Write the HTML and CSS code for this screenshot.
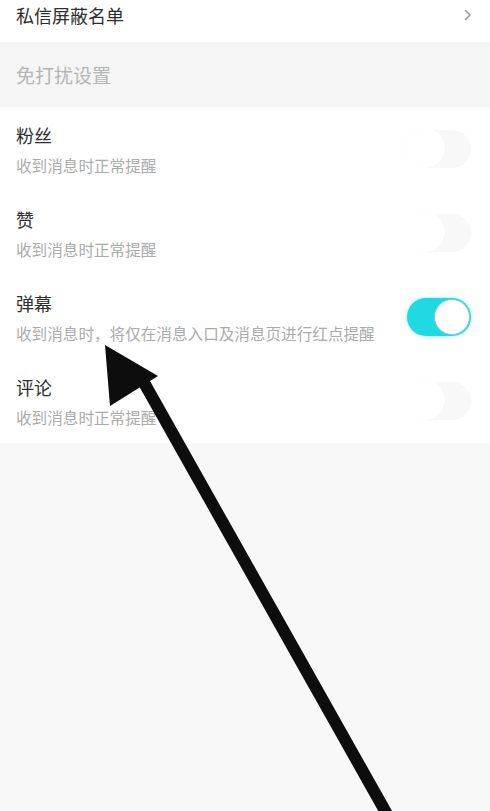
FILE: index.html
```html
<!DOCTYPE html>
<html lang="zh-CN">
<head>
<meta charset="utf-8">
<title>设置</title>
<link rel="stylesheet" href="styles.css">
</head>
<body>
<div class="page">
  <div class="top-row">
    <span class="top-title">私信屏蔽名单</span>
    <svg class="chevron" width="8" height="12" viewBox="0 0 8 12"><path d="M1.5 1.5 L6 6 L1.5 10.5" fill="none" stroke="#9a9a9a" stroke-width="1.6" stroke-linecap="round" stroke-linejoin="round"/></svg>
  </div>
  <div class="section-head">免打扰设置</div>
  <div class="list">
    <div class="row">
      <div class="texts"><div class="title">粉丝</div><div class="sub">收到消息时正常提醒</div></div>
      <div class="toggle"><div class="knob"></div></div>
    </div>
    <div class="row">
      <div class="texts"><div class="title">赞</div><div class="sub">收到消息时正常提醒</div></div>
      <div class="toggle"><div class="knob"></div></div>
    </div>
    <div class="row">
      <div class="texts"><div class="title">弹幕</div><div class="sub">收到消息时，将仅在消息入口及消息页进行红点提醒</div></div>
      <div class="toggle on"><div class="knob"></div></div>
    </div>
    <div class="row">
      <div class="texts"><div class="title">评论</div><div class="sub">收到消息时正常提醒</div></div>
      <div class="toggle"><div class="knob"></div></div>
    </div>
  </div>
  <svg class="arrow" width="490" height="811" viewBox="0 0 490 811">
    <line x1="138" y1="372" x2="397" y2="832" stroke="#0d0d0d" stroke-width="12"/>
    <polygon points="105,345 158,376 110,406" fill="#0d0d0d"/>
  </svg>
</div>
</body>
</html>
```
FILE: styles.css
```css
html, body {
  margin: 0;
  padding: 0;
}
body {
  background: #f8f8f8;
  font-family: "Noto Sans CJK SC", "Noto Sans", sans-serif;
}
.page {
  position: relative;
  width: 490px;
  height: 811px;
  overflow: hidden;
  background: #f8f8f8;
}
.top-row {
  height: 42px;
  background: #ffffff;
  display: flex;
  justify-content: space-between;
  align-items: flex-start;
  padding: 0 18px 0 16px;
}
.top-title {
  font-size: 18px;
  line-height: 30px;
  color: #2e2e2e;
}
.chevron {
  margin-top: 9px;
}
.section-head {
  height: 65px;
  display: flex;
  align-items: center;
  padding-left: 16px;
  font-size: 19px;
  color: #b5b5b5;
  background: #f5f5f5;
}
.list {
  background: #ffffff;
}
.row {
  height: 84px;
  box-sizing: border-box;
  display: flex;
  align-items: center;
  justify-content: space-between;
  padding: 0 19px 0 16px;
}
.texts {
  padding-top: 1px;
}
.title {
  font-size: 18px;
  line-height: 24px;
  color: #2e2e2e;
}
.sub {
  margin-top: 7px;
  font-size: 15.6px;
  line-height: 22px;
  color: #ababab;
}
.toggle {
  width: 64px;
  height: 38px;
  border-radius: 19px;
  background: #f8f8f8;
  position: relative;
  flex-shrink: 0;
}
.toggle .knob {
  position: absolute;
  left: -2px;
  top: -2px;
  width: 40px;
  height: 40px;
  border-radius: 50%;
  background: #ffffff;
  box-shadow: 0 0 2px rgba(0, 0, 0, 0.035);
}
.toggle.on {
  background: #1fdae3;
  box-shadow: 0 0 3px rgba(31, 218, 227, 0.6);
}
.toggle.on .knob {
  left: auto;
  right: 1px;
  top: 1px;
  width: 34px;
  height: 34px;
  border: 1px solid #8fc9cb;
  box-shadow: none;
}
.arrow {
  position: absolute;
  left: 0;
  top: 0;
  pointer-events: none;
}
```
